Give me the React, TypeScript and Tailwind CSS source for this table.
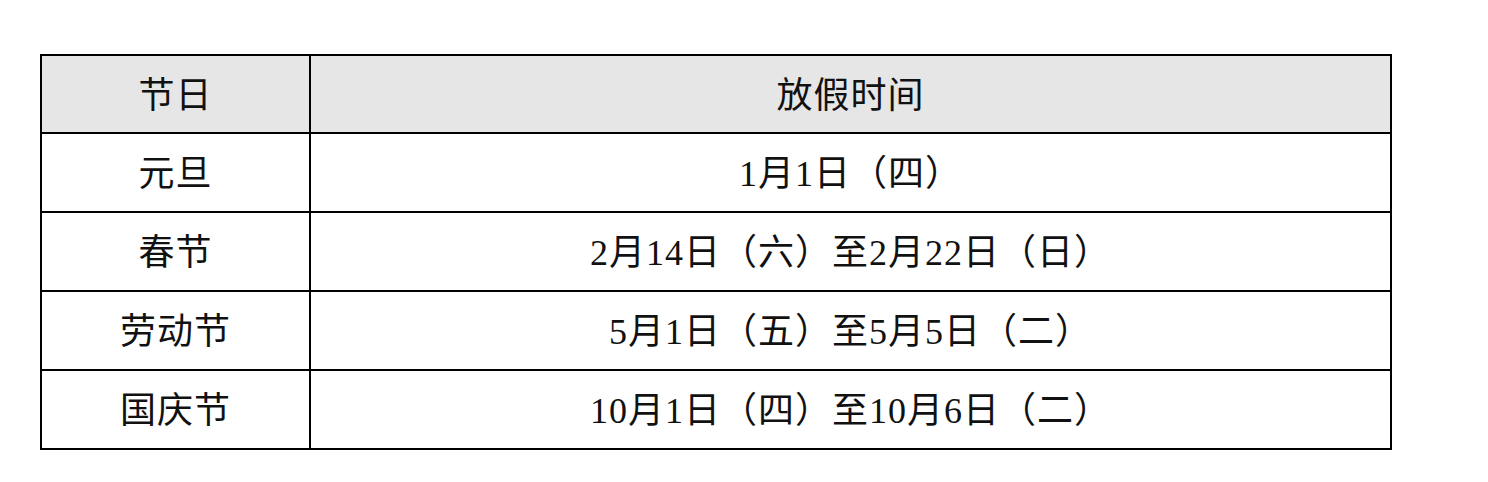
const rows = [
  { name: '元旦', time: '1月1日（四）' },
  { name: '春节', time: '2月14日（六）至2月22日（日）' },
  { name: '劳动节', time: '5月1日（五）至5月5日（二）' },
  { name: '国庆节', time: '10月1日（四）至10月6日（二）' },
];

const App = () => {
  return (
    <div className="min-h-screen bg-white pt-[54px] pl-[40px] font-['Liberation_Serif','Noto_Sans_CJK_SC',serif] text-[#111]">
      <table className="w-[1352px] border-collapse border-2 border-black text-[36px] leading-none tracking-[1px]">
        <thead>
          <tr className="h-[78px] bg-[#e6e6e6]">
            <th className="w-[269px] border-2 border-black pt-[3px] font-normal">节日</th>
            <th className="border-2 border-black pt-[3px] font-normal">放假时间</th>
          </tr>
        </thead>
        <tbody>
          {rows.map((r) => (
            <tr key={r.name} className="h-[79px]">
              <td className="border-2 border-black pt-[3px] text-center">{r.name}</td>
              <td className="border-2 border-black pt-[3px] text-center">{r.time}</td>
            </tr>
          ))}
        </tbody>
      </table>
    </div>
  );
};

export default App;
